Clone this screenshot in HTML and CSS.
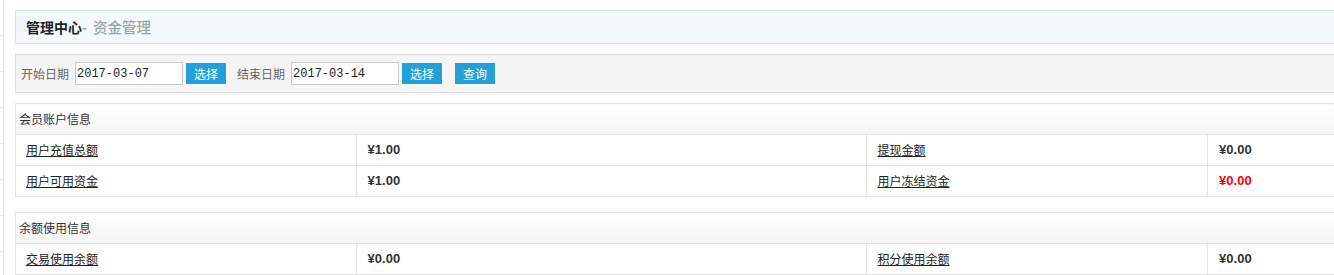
FILE: index.html
```html
<!DOCTYPE html>
<html lang="zh-CN">
<head>
  <meta charset="UTF-8">
  <title>资金管理</title>
  <link rel="stylesheet" href="styles.css">
</head>
<body>
  <div class="side">
    <div class="side-item"></div>
    <div class="side-item"></div>
    <div class="side-item"></div>
    <div class="side-item"></div>
    <div class="side-item"></div>
    <div class="side-item"></div>
    <div class="side-item"></div>
    <div class="side-item"></div>
  </div>
  <div class="main">
    <div class="page-title"><b>管理中心</b><span class="dash">-</span><span class="sub">资金管理</span></div>

    <div class="search">
      <label>开始日期</label>
      <input type="text" class="date" value="2017-03-07">
      <button class="btn">选择</button>
      <label class="gap">结束日期</label>
      <input type="text" class="date" value="2017-03-14">
      <button class="btn">选择</button>
      <button class="btn query">查询</button>
    </div>

    <table class="info">
      <colgroup><col class="c-name"><col class="c-money"><col class="c-name"><col class="c-money"></colgroup>
      <tr><th colspan="4">会员账户信息</th></tr>
      <tr>
        <td class="name"><a href="#">用户充值总额</a></td>
        <td class="money">¥1.00</td>
        <td class="name"><a href="#">提现金额</a></td>
        <td class="money">¥0.00</td>
      </tr>
      <tr>
        <td class="name"><a href="#">用户可用资金</a></td>
        <td class="money">¥1.00</td>
        <td class="name"><a href="#">用户冻结资金</a></td>
        <td class="money red">¥0.00</td>
      </tr>
    </table>

    <table class="info second">
      <colgroup><col class="c-name"><col class="c-money"><col class="c-name"><col class="c-money"></colgroup>
      <tr><th colspan="4">余额使用信息</th></tr>
      <tr>
        <td class="name"><a href="#">交易使用余额</a></td>
        <td class="money">¥0.00</td>
        <td class="name"><a href="#">积分使用余额</a></td>
        <td class="money">¥0.00</td>
      </tr>
    </table>
  </div>
</body>
</html>
```

FILE: styles.css
```css
body {
  margin: 0;
  display: flex;
  overflow: hidden;
  font-family: "Noto Sans CJK SC", "Liberation Sans", sans-serif;
  font-size: 12px;
  color: #333;
}
.side {
  width: 3px;
  flex-shrink: 0;
  border-right: 1px solid #e6e6e6;
}
.side-item {
  height: 35px;
  border-bottom: 1px solid #ececec;
}
.main {
  width: 1704px;
  flex-shrink: 0;
  margin-left: 11px;
  padding-top: 10px;
}
.page-title {
  height: 32px;
  line-height: 31px;
  padding-left: 10px;
  border: 1px solid #dedede;
  background: #f3f8fb;
  font-size: 14px;
}
.page-title b {
  color: #222;
}
.page-title .dash {
  display: inline-block;
  width: 11px;
  color: #9aa6a6;
  font-weight: bold;
}
.page-title .sub {
  color: #9aa6a6;
  font-size: 14.5px;
  font-weight: 500;
}
.search {
  display: flex;
  align-items: center;
  height: 37px;
  margin-top: 10px;
  padding-left: 5px;
  border: 1px solid #dedede;
  background: #f5f5f5;
}
.search label {
  color: #666;
  margin-right: 6px;
}
.search label.gap {
  margin-left: 11px;
}
.date {
  width: 108px;
  height: 23px;
  box-sizing: border-box;
  margin: 0;
  padding: 0 1px;
  border: 1px solid #c8c8c8;
  background: #fff;
  font-family: "Liberation Mono", monospace;
  font-size: 12px;
  color: #222;
  outline: none;
}
.btn {
  width: 40px;
  height: 21px;
  margin: 0 0 0 3px;
  padding: 0;
  border: none;
  background: #23a0d7;
  color: #fff;
  font-family: "Noto Sans CJK SC", sans-serif;
  font-size: 12px;
  cursor: pointer;
}
.btn.query {
  margin-left: 13px;
}
.info {
  width: 100%;
  margin-top: 10px;
  border-collapse: collapse;
  table-layout: fixed;
}
.info.second {
  margin-top: 15px;
}
.c-name {
  width: 20%;
}
.c-money {
  width: 30%;
}
.info th,
.info td {
  height: 28px;
  padding: 0 0 2px;
  border: 1px solid #e2e2e2;
}
.info th {
  text-align: left;
  font-weight: normal;
  padding-left: 3px;
  color: #333;
  background: linear-gradient(#ffffff, #f4f4f4);
}
.info td.name {
  padding-left: 10px;
}
.info td.money {
  padding-left: 11px;
  font-family: "Liberation Sans", Arial, sans-serif;
  font-size: 13px;
  font-weight: bold;
  color: #333;
}
.info td.red {
  color: #ff0000;
}
.name a {
  color: #222;
  text-decoration: underline;
}
```
